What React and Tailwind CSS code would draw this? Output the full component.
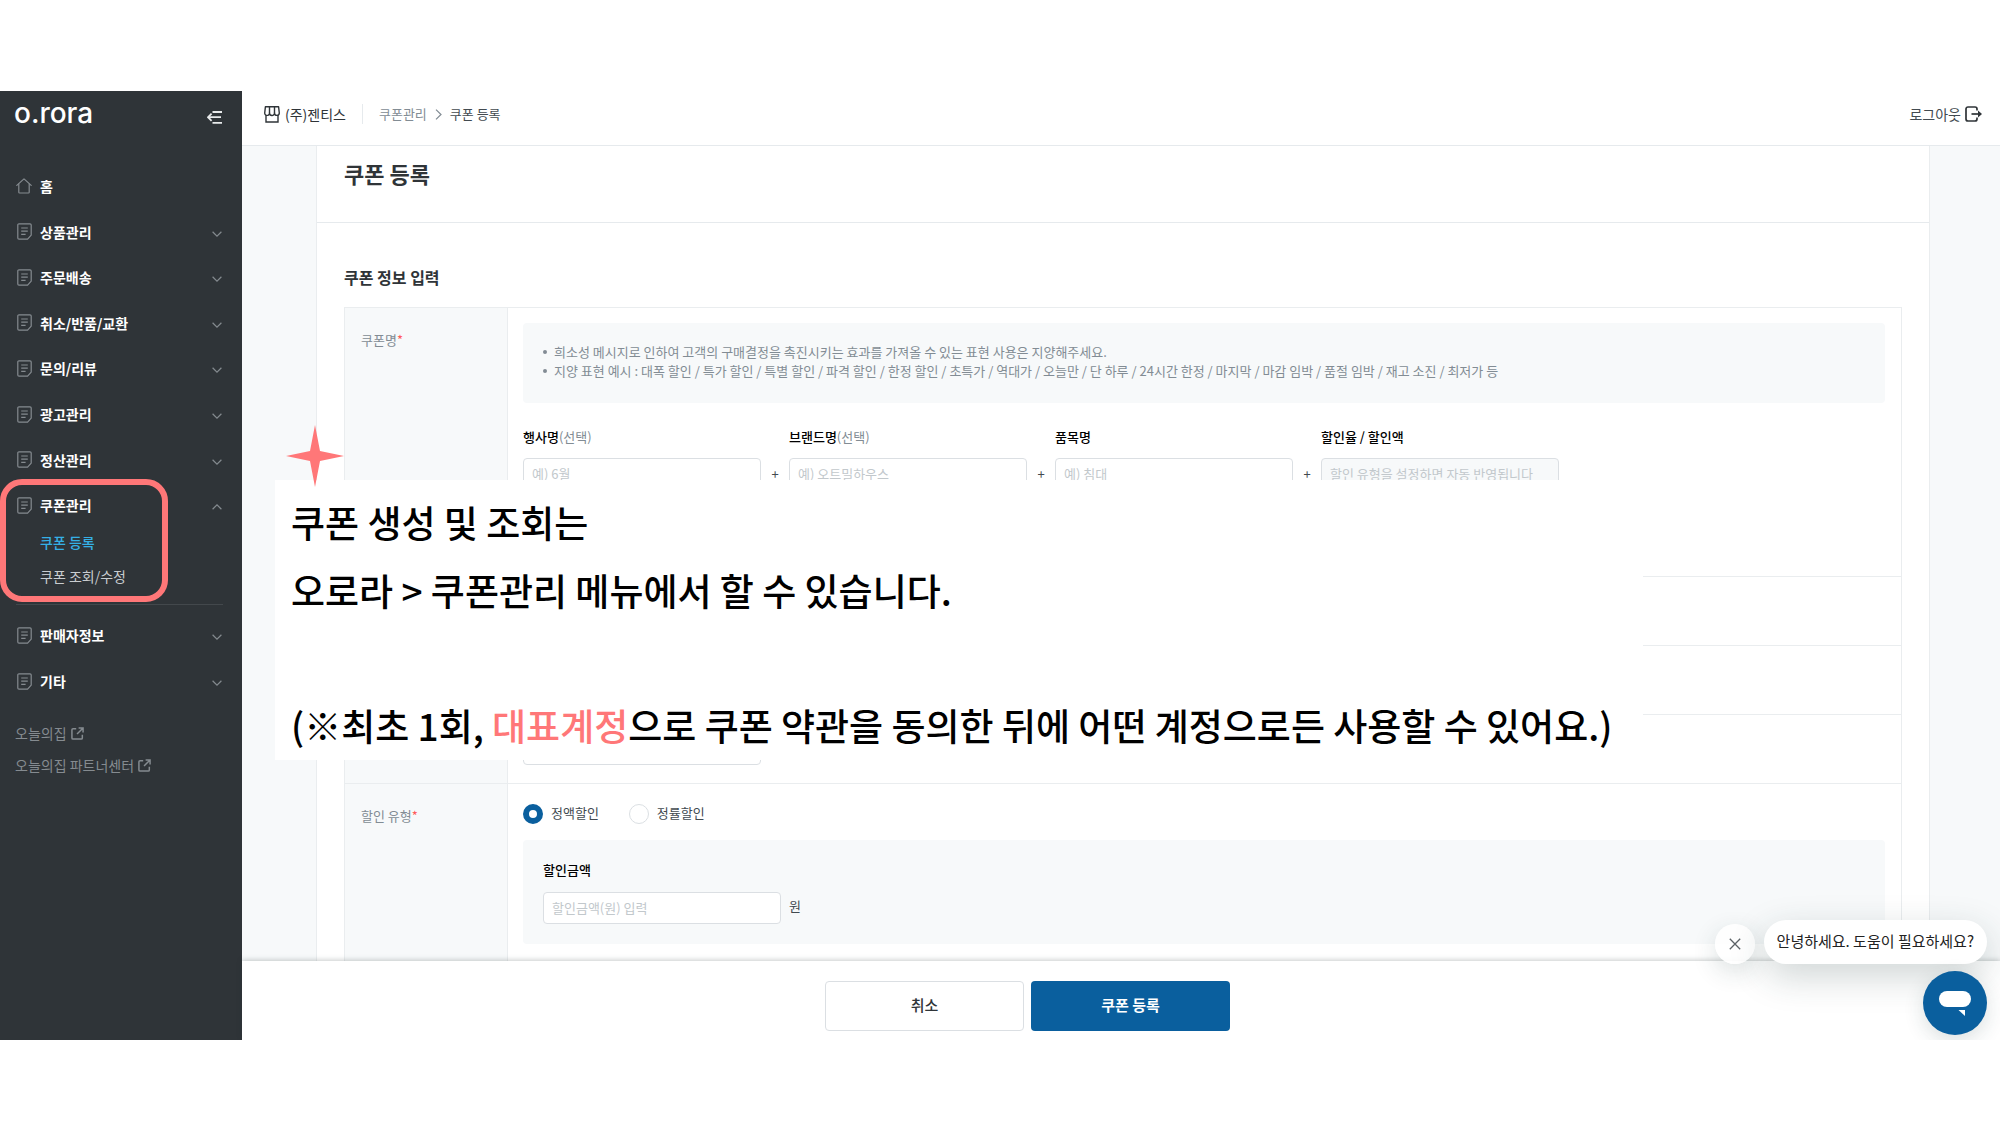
import React from "react";

const DocIcon = () => (
  <svg width="15" height="17" viewBox="0 0 15 17" fill="none" stroke="#858b90" strokeWidth="1.2" aria-hidden="true">
    <path d="M2 .8h11a1.2 1.2 0 0 1 1.2 1.2v10.2l-3.6 4H2A1.2 1.2 0 0 1 .8 15V2A1.2 1.2 0 0 1 2 .8z" strokeLinejoin="round" />
    <path d="M4.2 5h6.6M4.2 8.2h6.6M4.2 11.4h4.4" />
  </svg>
);

const HomeIcon = () => (
  <svg width="16" height="16" viewBox="0 0 16 16" fill="none" stroke="#858b90" strokeWidth="1.2" strokeLinejoin="round" strokeLinecap="round" aria-hidden="true">
    <path d="M.8 7.4 8 .9l7.2 6.5" />
    <path d="M2.8 6v8.2a.8.8 0 0 0 .8.8h8.8a.8.8 0 0 0 .8-.8V6" />
  </svg>
);

const Chevron = ({ up }) => (
  <svg width="10" height="6" viewBox="0 0 10 6" fill="none" stroke="#858b90" strokeWidth="1.2" aria-hidden="true">
    <path d={up ? "M.6 5.2 5 .9l4.4 4.3" : "M.6.8 5 5.1 9.4.8"} />
  </svg>
);

const CollapseIcon = () => (
  <svg width="15" height="13" viewBox="0 0 15 13" fill="none" stroke="#e8eaeb" strokeWidth="1.8" aria-hidden="true">
    <path d="M5.5 1H15M1 6.2h13M5.5 11.8H15" />
    <path d="M4.6 2.6 1 6.2l3.6 3.6" />
  </svg>
);

const ExternalIcon = () => (
  <svg width="13" height="13" viewBox="0 0 14 14" fill="none" stroke="#858b90" strokeWidth="1.6" aria-hidden="true">
    <path d="M5.6 1.8H2.2A1.2 1.2 0 0 0 1 3v8.8A1.2 1.2 0 0 0 2.2 13H11a1.2 1.2 0 0 0 1.2-1.2V8.4" />
    <path d="M8.2 1H13v4.8M13 1 6.500 7.500" />
  </svg>
);

const StoreIcon = () => (
  <svg width="16" height="17" viewBox="0 0 16 17" fill="none" stroke="#2f3438" strokeWidth="1.4" aria-hidden="true">
    <path d="M1.400.8h13.200l.7 6.200a2.300 2.300 0 0 1-4.800 0 2.450 2.450 0 0 1-5 0A2.300 2.300 0 0 1 .7 7z" strokeLinejoin="round" />
    <path d="M5.500 7V.8M10.500 7V.8M2 9.200V16h12V9.200" />
  </svg>
);

const LogoutIcon = () => (
  <svg width="17" height="16" viewBox="0 0 17 16" fill="none" stroke="#2f3438" strokeWidth="1.700" aria-hidden="true">
    <path d="M12 4.600V3a2 2 0 0 0-2-2H3a2 2 0 0 0-2 2v10a2 2 0 0 0 2 2h7a2 2 0 0 0 2-2v-1.600" />
    <path d="M6.500 8h8" />
    <path d="M13 4.500 17 8l-4 3.500z" fill="#2f3438" stroke="none" />
  </svg>
);

const menu = ["상품관리", "주문배송", "취소/반품/교환", "문의/리뷰", "광고관리", "정산관리", "쿠폰관리"];

function MenuItem({ label, open, className = "h-full" }) {
  return (
    <button type="button" className={`flex w-full items-center pb-[2px] pl-[17px] pr-5 text-left text-sm font-bold text-white ${className}`}>
      <DocIcon />
      <span className="ml-2 flex-1">{label}</span>
      <span className="pt-1"><Chevron up={open} /></span>
    </button>
  );
}

function Sidebar() {
  return (
    <aside className="flex w-[242px] shrink-0 flex-col bg-[#2f3438]">
      <div className="flex h-[73px] items-start justify-between pl-[14px] pr-5">
        <a href="#home" className="mt-1 font-['Inter'] text-[28px] font-medium leading-[36px] text-white">o.rora</a>
        <button type="button" aria-label="메뉴 접기" className="mt-5"><CollapseIcon /></button>
      </div>
      <nav className="flex flex-col">
        <a href="#home" className="flex h-[46px] items-center pb-[2px] pl-4 text-sm font-bold text-white">
          <HomeIcon />
          <span className="ml-2">홈</span>
        </a>
        <div className="relative">
          <ul className="grid h-[319px] auto-rows-fr">
            {menu.map((m) => (
              <li key={m}><MenuItem label={m} open={m === "쿠폰관리"} /></li>
            ))}
          </ul>
          <ul className="flex flex-col gap-2 pl-10 text-sm leading-[26px]">
            <li className="h-[26px]"><a href="#new" className="font-medium text-[#35b0e6]">쿠폰 등록</a></li>
            <li className="h-[26px]"><a href="#list" className="text-[#c9cdd0]">쿠폰 조회/수정</a></li>
          </ul>
          <div className="absolute -bottom-[13px] left-0 h-[123px] w-[168px] rounded-[22px] border-[6px] border-[#ff7778]" />
        </div>
        <hr className="ml-4 mr-[19px] mt-[15px] border-[#43484c]" />
        <div className="mt-2">
          <MenuItem label="판매자정보" className="h-[46px]" />
          <MenuItem label="기타" className="h-[46px]" />
        </div>
        <div className="mt-3 flex flex-col pl-[15px] text-sm text-[#858b90]">
          <a href="#ohouse" className="flex h-8 items-center gap-1">오늘의집 <ExternalIcon /></a>
          <a href="#partner" className="flex h-8 items-center gap-1">오늘의집 파트너센터 <ExternalIcon /></a>
        </div>
      </nav>
    </aside>
  );
}

function TopBar() {
  return (
    <header className="flex h-[55px] shrink-0 items-center border-b border-[#e6eaed] bg-white pb-2 pl-[22px] pr-[18px] text-[13px]">
      <StoreIcon />
      <span className="ml-[5px] text-sm text-[#2f3438]">(주)젠티스</span>
      <span className="ml-4 h-5 w-px bg-[#e6eaed]" />
      <a href="#coupon" className="ml-4 text-[#828c94]">쿠폰관리</a>
      <svg className="mx-2" width="7" height="11" viewBox="0 0 7 11" fill="none" stroke="#828c94" strokeWidth="1.200" aria-hidden="true"><path d="M1 .6 6 5.500 1 10.400" /></svg>
      <span className="text-[#424a50]">쿠폰 등록</span>
      <button type="button" className="ml-auto flex items-center gap-1 text-sm text-[#424a50]">로그아웃 <LogoutIcon /></button>
    </header>
  );
}

const nameParts = [
  { id: "event", label: "행사명", note: "(선택)", hint: "예) 6월" },
  { id: "brand", label: "브랜드명", note: "(선택)", hint: "예) 오트밀하우스" },
  { id: "item", label: "품목명", hint: "예) 침대" },
  { id: "rate", label: "할인율 / 할인액", hint: "할인 유형을 설정하면 자동 반영됩니다", disabled: true },
];

const inputClass = "block h-8 w-[238px] rounded-[4px] border border-[#dbdfe3] bg-white px-2 pb-[2px] text-[13px] placeholder:text-[#c2c8cc] disabled:bg-[#f7f9fa]";

function Row({ label, className, children }) {
  return (
    <div className={`grid grid-cols-[163px_1fr] border-b border-[#eaedef] ${className}`}>
      <div className="border-r border-[#eaedef] bg-[#f7f9fa] pl-4 pt-[22px] text-[13px] leading-5 text-[#828c94]">
        {label && <>{label}<span className="text-[#ff5b5b]">*</span></>}
      </div>
      <div className="pl-[15px] pr-4">{children}</div>
    </div>
  );
}

function CouponForm() {
  return (
    <div className="ml-[74px] mr-[70px] border-x border-[#eaedef] bg-white">
      <h1 className="h-[77px] border-b border-[#e6eaed] pl-[27px] pt-[11px] text-[22px] font-bold leading-8 text-[#2f3438]">쿠폰 등록</h1>
      <h2 className="pl-[27px] pt-[42px] text-base font-bold leading-6 text-[#2f3438]">쿠폰 정보 입력</h2>
      <form className="mx-[27px] mt-[18px] border border-[#eaedef]">
        <Row label="쿠폰명" className="h-[269px]">
          <div className="mt-[15px] h-20 rounded bg-[#f7f9fa] pl-5 pt-[19px] text-[13px] leading-[19px] text-[#828c94]">
            <ul className="list-none">
              {[
                "희소성 메시지로 인하여 고객의 구매결정을 촉진시키는 효과를 가져올 수 있는 표현 사용은 지양해주세요.",
                "지양 표현 예시 : 대폭 할인 / 특가 할인 / 특별 할인 / 파격 할인 / 한정 할인 / 초특가 / 역대가 / 오늘만 / 단 하루 / 24시간 한정 / 마지막 / 마감 임박 / 품절 임박 / 재고 소진 / 최저가 등",
              ].map((t) => (
                <li key={t} className="flex items-center gap-[7px]"><span className="size-1 shrink-0 rounded-full bg-[#828c94]" />{t}</li>
              ))}
            </ul>
          </div>
          <div className="mt-6 flex">
            {nameParts.map((p, i) => (
              <React.Fragment key={p.id}>
                {i > 0 && <span className="w-7 pt-[39px] text-center text-[13px] leading-4 text-[#424a50]">+</span>}
                <div>
                  <label htmlFor={p.id} className="mb-[11px] block text-[13px] leading-5 text-[#828c94]">
                    <span className="font-medium text-black">{p.label}</span>{p.note}
                  </label>
                  <input id={p.id} type="text" placeholder={p.hint} disabled={p.disabled} className={inputClass} />
                </div>
              </React.Fragment>
            ))}
          </div>
        </Row>
        <Row className="h-[69px]" />
        <Row className="h-[69px]" />
        <Row className="h-[69px]">
          <input aria-label="쿠폰 금액" type="text" className={`mt-[18px] ${inputClass}`} />
        </Row>
        <Row label="할인 유형" className="h-[178px]">
          <div className="mt-5 flex gap-[30px] text-[13px] leading-[18px] text-[#424a50]">
            <label className="flex h-5 items-start gap-2">
              <input type="radio" name="type" defaultChecked className="size-5 appearance-none rounded-full border border-[#dbdfe3] bg-white checked:border-[6px] checked:border-[#0a5f9e]" />정액할인
            </label>
            <label className="flex h-5 items-start gap-2">
              <input type="radio" name="type" className="size-5 appearance-none rounded-full border border-[#dbdfe3] bg-white checked:border-[6px] checked:border-[#0a5f9e]" />정률할인
            </label>
          </div>
          <div className="mt-4 h-[104px] rounded bg-[#f7f9fa] pl-5 pt-5">
            <label htmlFor="amount" className="mb-3 block text-[13px] font-medium leading-5 text-black">할인금액</label>
            <div className="flex gap-2 text-[13px] leading-7 text-[#424a50]">
              <input id="amount" type="text" placeholder="할인금액(원) 입력" className={inputClass} />원
            </div>
          </div>
        </Row>
      </form>
    </div>
  );
}

function Notice() {
  return (
    <section className="absolute left-[275px] top-[389px] h-[280px] w-[1368px] bg-white pl-4 pt-2 text-[37px] font-medium leading-[68px] text-black">
      <svg className="absolute -top-[55px] left-[11px]" width="58" height="62" viewBox="0 0 58 62" fill="#ff7778" aria-hidden="true">
        <path d="M29 0 34 26 58 31 34 36 29 62 24 36 0 31 24 26z" />
      </svg>
      <p>쿠폰 생성 및 조회는</p>
      <p>오로라 &gt; 쿠폰관리 메뉴에서 할 수 있습니다.</p>
      <p className="mt-[67px] whitespace-nowrap">
        (※최초 1회, <span className="text-[#ff7778]">대표계정</span>으로 쿠폰 약관을 동의한 뒤에 어떤 계정으로든 사용할 수 있어요.)
      </p>
    </section>
  );
}

function ChatWidget() {
  return (
    <div className="absolute bottom-[5px] right-[13px] flex flex-col items-end gap-[7px]">
      <div className="flex items-end gap-[9px]">
        <button type="button" aria-label="닫기" className="flex size-10 items-center justify-center rounded-full bg-white/90 shadow-[0_8px_24px_rgba(30,60,60,0.16)]">
          <svg width="12" height="12" viewBox="0 0 12 12" stroke="#5c6266" strokeWidth="1.300" aria-hidden="true"><path d="M.8.8l10.400 10.400M11.200.8.8 11.200" /></svg>
        </button>
        <p className="flex h-11 items-center whitespace-nowrap rounded-full bg-white px-[13px] pb-[2px] text-[15px] text-[#222] shadow-[0_12px_36px_rgba(30,60,60,0.22)]">안녕하세요. 도움이 필요하세요?</p>
      </div>
      <button type="button" aria-label="채팅 상담" className="flex size-16 items-center justify-center rounded-full bg-[#0a5f9e] shadow-[0_6px_20px_rgba(30,60,60,0.16)]">
        <svg width="32" height="26" viewBox="0 0 32 26" fill="#fff" aria-hidden="true">
          <rect width="32" height="16" y="1" rx="8" />
          <path d="M19.500 20H26v6z" />
        </svg>
      </button>
    </div>
  );
}

export default function App() {
  return (
    <div className="h-screen bg-white pb-[85px] pt-[91px] font-['Noto_Sans_CJK_KR',sans-serif]">
      <div className="relative flex h-full overflow-hidden">
        <Sidebar />
        <main className="flex min-w-0 flex-1 flex-col">
          <TopBar />
          <div className="min-h-0 flex-1 overflow-hidden bg-[#f7f9fa]"><CouponForm /></div>
          <footer className="relative flex shrink-0 justify-center gap-[7px] bg-white pb-[9px] pr-[187px] pt-5 text-[15px] font-medium leading-5 shadow-[0_-1px_5px_rgba(40,50,50,0.25)]">
            <button type="button" className="h-[50px] w-[199px] rounded-[4px] border border-[#dbdfe3] bg-white pb-[2px] text-[#2f3438]">취소</button>
            <button type="button" className="h-[50px] w-[199px] rounded-[4px] bg-[#0a5f9e] pb-[2px] font-bold text-white">쿠폰 등록</button>
          </footer>
        </main>
        <Notice />
        <ChatWidget />
      </div>
    </div>
  );
}
